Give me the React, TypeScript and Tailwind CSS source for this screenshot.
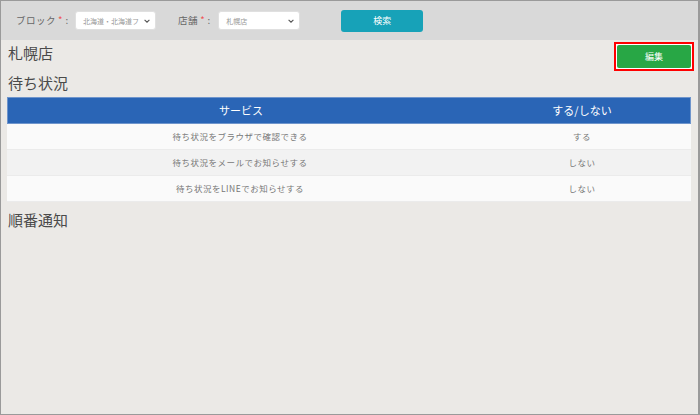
import React from "react";

const font = { fontFamily: '"Noto Sans CJK JP", "Noto Sans", sans-serif' };

function Select({ value, width }: { value: string; width: string }) {
  return (
    <div className={`flex items-center justify-between h-[19px] ${width} bg-white rounded-[3px] border border-[#e0e0e0] pl-[7px] pr-[4px]`}>
      <span className="text-[7px] text-[#999] leading-[12px] whitespace-nowrap">{value}</span>
      <svg width="8" height="8" viewBox="0 0 10 10" className="shrink-0 ml-[2px]">
        <path d="M2 3.5 L5 6.5 L8 3.5" fill="none" stroke="#555" strokeWidth="1.4" />
      </svg>
    </div>
  );
}

export default function App() {
  const rows = [
    ["待ち状況をブラウザで確認できる", "する"],
    ["待ち状況をメールでお知らせする", "しない"],
    ["待ち状況をLINEでお知らせする", "しない"],
  ];
  return (
    <div style={font} className="w-[700px] h-[415px] bg-[#ebe9e6] border border-[#9a9a9a] border-r-[2px] flex flex-col overflow-hidden">
      <div className="h-[39px] bg-[#d9d9d9] flex items-center pl-[15px] shrink-0">
        <span className="text-[9.5px] text-[#666] tracking-[0.5px]">ブロック</span>
        <span className="text-[9.5px] text-[#f05050] ml-[2px]">*</span>
        <span className="text-[9.5px] text-[#666] ml-[3px]">:</span>
        <div className="ml-[7px]">
          <Select value="北海道・北海道フ" width="w-[81px]" />
        </div>
        <span className="text-[9.5px] text-[#666] ml-[22px] tracking-[0.5px]">店舗</span>
        <span className="text-[9.5px] text-[#f05050] ml-[2px]">*</span>
        <span className="text-[9.5px] text-[#666] ml-[3px]">:</span>
        <div className="ml-[8px]">
          <Select value="札幌店" width="w-[82px]" />
        </div>
        <button className="ml-[41px] w-[82px] h-[22px] bg-[#17a2b8] rounded-[3px] text-white text-[9px] flex items-center justify-center">
          検索
        </button>
      </div>
      <div className="flex flex-col px-[6px]">
        <div className="flex items-start justify-between h-[32px] pt-[3px]">
          <div className="text-[15px] text-[#4a4a4a] leading-[20px] pl-[1px]">札幌店</div>
          <div className="border-2 border-[#ff0000] mt-[-1px] mr-[-2px] p-[1px] bg-white">
            <button className="w-[74px] h-[23px] bg-[#28a745] text-white text-[9px] flex items-center justify-center rounded-[2px]">
              編集
            </button>
          </div>
        </div>
        <div className="text-[15px] text-[#4a4a4a] leading-[20px] pl-[1px] mt-[1px]">待ち状況</div>
        <div className="mt-[4px] mr-[1px]">
          <div className="flex h-[27px] bg-[#2a65b6] border border-[#6f95cc] text-white text-[11px] items-center">
            <div className="w-[466px] text-center">サービス</div>
            <div className="flex-1 text-center">する/しない</div>
          </div>
          {rows.map((r, i) => (
            <div
              key={i}
              className={`flex h-[26px] items-center text-[8.5px] text-[#777] border-b border-[#ebebeb] ${i % 2 === 1 ? "bg-[#f2f2f2]" : "bg-[#fafafa]"}`}
            >
              <div className="w-[466px] text-center tracking-[0.5px]">{r[0]}</div>
              <div className="flex-1 text-center tracking-[0.5px]">{r[1]}</div>
            </div>
          ))}
        </div>
        <div className="text-[15px] text-[#4a4a4a] leading-[20px] pl-[1px] mt-[8px]">順番通知</div>
      </div>
    </div>
  );
}
